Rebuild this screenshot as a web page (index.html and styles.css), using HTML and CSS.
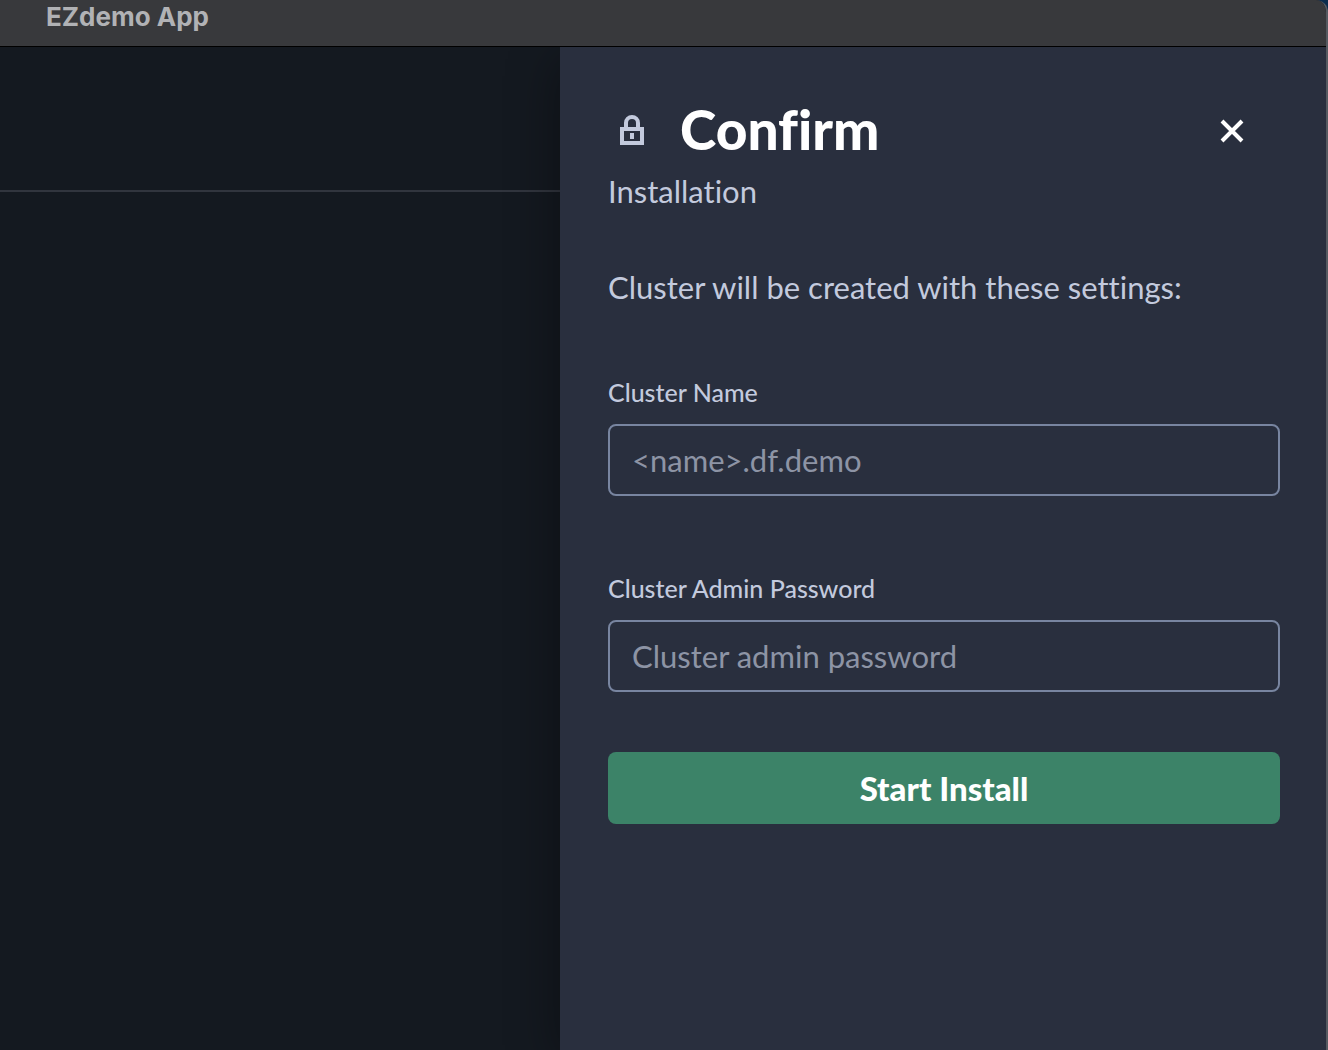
FILE: index.html
```html
<!DOCTYPE html>
<html lang="en">
<head>
<meta charset="utf-8">
<title>EZdemo App</title>
<link rel="stylesheet" href="styles.css">
</head>
<body>
<div class="window">
  <header class="titlebar">EZdemo App</header>
  <div class="workspace">
    <main class="content">
      <div class="content-header"></div>
    </main>
    <aside class="panel" aria-labelledby="panel-title">
      <div class="panel-heading">
        <svg class="lock" viewBox="0 0 48 48" aria-hidden="true">
          <path d="M18 21v-5a6 6 0 0 1 12 0v5M14 22h20v14H14zM24 26v6" fill="none" stroke="currentColor" stroke-width="4"/>
        </svg>
        <h1 class="panel-title" id="panel-title">Confirm</h1>
        <button class="close" type="button" aria-label="Close">
          <svg class="close-icon" viewBox="0 0 24 24" aria-hidden="true">
            <path d="M2 2l20 20M22 2L2 22" fill="none" stroke="currentColor" stroke-width="4"/>
          </svg>
        </button>
      </div>
      <p class="subtitle">Installation</p>
      <p class="intro">Cluster will be created with these settings:</p>
      <form class="form">
        <div class="field">
          <label class="label" for="cluster-name">Cluster Name</label>
          <input class="input" id="cluster-name" type="text" placeholder="&lt;name&gt;.df.demo">
        </div>
        <div class="field">
          <label class="label" for="cluster-password">Cluster Admin Password</label>
          <input class="input" id="cluster-password" type="password" placeholder="Cluster admin password">
        </div>
        <button class="submit" type="button">Start Install</button>
      </form>
    </aside>
  </div>
</div>
</body>
</html>
```
FILE: styles.css
```css
* {
  box-sizing: border-box;
}

body {
  margin: 0;
  background: #0b2c4d;
  color: #c3cadd;
  font-family: Lato, "Open Sans", sans-serif;
  font-variant-ligatures: none;
}

.window {
  display: flex;
  flex-direction: column;
  min-height: 100vh;
  overflow: hidden;
  border-right: 2px solid #555a61;
  border-top-right-radius: 12px;
  background: #141920;
}

.titlebar {
  height: 47px;
  padding: 0 46px;
  border-bottom: 1px solid #000;
  background: #38393c;
  color: #b1b2b5;
  font: 700 26px/34px Inter, "Liberation Sans", sans-serif;
}

.workspace {
  display: flex;
  flex: 1;
  overflow: hidden;
}

.content {
  flex: 1;
}

.content-header {
  height: 145px;
  border-bottom: 2px solid #31353e;
}

.panel {
  width: 766px;
  max-width: 100%;
  padding: 48px 46px 48px 48px;
  background: #292f3e;
  box-shadow: 0 12px 48px rgba(0, 0, 0, 0.4);
}

.panel-heading {
  display: flex;
  align-items: center;
  gap: 24px;
  height: 72px;
}

.lock {
  width: 48px;
  height: 48px;
}

.panel-title {
  flex: 1;
  margin: 0;
  color: #fff;
  font-size: 55px;
  font-weight: 900;
  line-height: 68px;
  padding-bottom: 4px;
}

.close {
  display: flex;
  align-items: center;
  justify-content: center;
  width: 96px;
  height: 72px;
  padding: 0;
  border: 0;
  background: none;
  color: #fff;
}

.close-icon {
  width: 24px;
  height: 24px;
}

.subtitle,
.intro {
  margin: 0;
  font-size: 31px;
  line-height: 48px;
}

.intro {
  margin-top: 48px;
}

.form {
  display: flex;
  flex-direction: column;
  gap: 60px;
  margin-top: 64px;
}

.field {
  display: flex;
  flex-direction: column;
  gap: 15px;
}

.field + .field {
  margin-top: 15px;
}

.label {
  font-size: 25px;
  font-weight: 500;
  line-height: 34px;
}

.input {
  width: 100%;
  height: 72px;
  padding: 0 22px;
  border: 2px solid #7885a0;
  border-radius: 8px;
  background: transparent;
  color: #fff;
  font: inherit;
  font-size: 31px;
}

.input::placeholder {
  color: #8d94a5;
  opacity: 1;
}

.submit {
  height: 72px;
  border: 0;
  border-radius: 8px;
  background: #3c8368;
  color: #fff;
  font: inherit;
  font-size: 33px;
  font-weight: 900;
}
```
